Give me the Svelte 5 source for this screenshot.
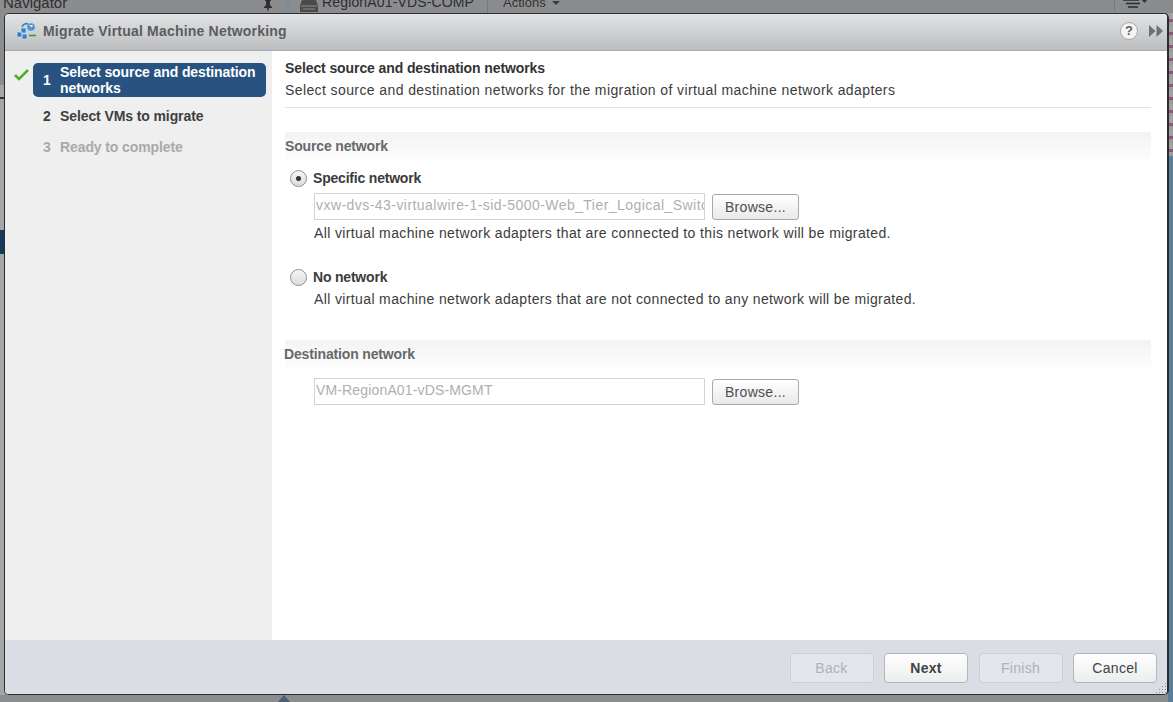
<script>
    const steps = [
        { n: 1, label: "Select source and destination networks", state: "active" },
        { n: 2, label: "Select VMs to migrate", state: "next" },
        { n: 3, label: "Ready to complete", state: "off" }
    ];
    const buttons = [
        { label: "Back", off: true },
        { label: "Next", bold: true },
        { label: "Finish", off: true },
        { label: "Cancel" }
    ];
</script>

<div class="screen">
    <div class="behind">
        <div class="behind_nav">Navigator</div>
        <svg class="pin" width="12" height="12" viewBox="0 0 12 12"><path d="M3 0h6v1H8v4l2 2v1H7l-1 4-1-4H2V7l2-2V1H3z" fill="#2f2f2f"/></svg>
        <div class="behind_sep"></div>
        <svg class="switch_icon" width="20" height="12" viewBox="0 0 20 12"><path d="M3 0h14l2 6v6H1V6z" fill="#4a4a4a"/><path d="M2 6h16M4 9h12" stroke="#8d8d8d"/></svg>
        <div class="behind_title">RegionA01-VDS-COMP</div>
        <div class="behind_actions">Actions <span class="caret"></span></div>
        <svg class="list_icon" width="26" height="12" viewBox="0 0 26 12"><path d="M1 1h16M4 4.500h14M6 8h10" stroke="#2b2b2b" stroke-width="1.500"/><path d="M19 0h7l-3.500 4z" fill="#333"/></svg>
    </div>
    <div class="left_strip"></div>
    <div class="left_mark"></div>
    <div class="right_strip"></div>
    <div class="bottom_mark"></div>

    <div class="modal">
        <header class="titlebar">
            <svg class="title_icon" width="20" height="18" viewBox="0 0 20 18">
                <path d="M1 10h5v5H1zM5 6h5v5H5zM6 12h5v5H6z" fill="#3b7fc9" stroke="#d8e6f4" stroke-width="0.600"/>
                <path d="M6 5c1-3 4-4 6-3" fill="none" stroke="#3b7fc9" stroke-width="1.600"/>
                <circle cx="15" cy="5" r="3.800" fill="#4a93d8"/>
                <path d="M13.500 3.500h3l-1.500 2" fill="none" stroke="#fff"/>
                <path d="M13 13.500h7" stroke="#2aa02a" stroke-width="1.600"/>
            </svg>
            <span class="title">Migrate Virtual Machine Networking</span>
            <span class="help">?</span>
            <svg class="more" width="14" height="12" viewBox="0 0 14 12"><path d="M0 0l6.500 6L0 12zM7.500 0L14 6l-6.500 6z" fill="#6e7174"/></svg>
        </header>

        <div class="body">
            <nav class="steps">
                {#each steps as s}
                    <div class="step {s.state}">
                        {#if s.state == "active"}
                            <svg class="check" width="16" height="13" viewBox="0 0 16 13"><path d="M1 7l4 4 9-9" fill="none" stroke="#4fae2e" stroke-width="2.500"/></svg>
                        {/if}
                        <span class="num">{s.n}</span>
                        <span class="label">{s.label}</span>
                    </div>
                {/each}
            </nav>

            <main class="content">
                <div class="page_head">
                    <div class="page_title">Select source and destination networks</div>
                    <div class="page_sub">Select source and destination networks for the migration of virtual machine network adapters</div>
                </div>

                <section class="group first">
                    <div class="group_title">Source network</div>
                    <div class="radio_row">
                        <span class="radio on"></span>
                        <span class="radio_label">Specific network</span>
                    </div>
                    <div class="field_row">
                        <div class="field long">vxw-dvs-43-virtualwire-1-sid-5000-Web_Tier_Logical_Switch</div>
                        <button class="browse">Browse...</button>
                    </div>
                    <div class="hint">All virtual machine network adapters that are connected to this network will be migrated.</div>
                    <div class="radio_row second">
                        <span class="radio"></span>
                        <span class="radio_label">No network</span>
                    </div>
                    <div class="hint tight">All virtual machine network adapters that are not connected to any network will be migrated.</div>
                </section>

                <section class="group dest_group">
                    <div class="group_title">Destination network</div>
                    <div class="field_row dest">
                        <div class="field">VM-RegionA01-vDS-MGMT</div>
                        <button class="browse">Browse...</button>
                    </div>
                </section>
            </main>
        </div>

        <footer class="footer">
            {#each buttons as b}
                <button class="foot_btn" class:off={b.off} class:bold={b.bold}>{b.label}</button>
            {/each}
            <svg class="grip" width="12" height="12" viewBox="0 0 12 12"><path d="M10 1h1v1h-1zM7 4h1v1H7zM10 4h1v1h-1zM4 7h1v1H4zM7 7h1v1H7zM10 7h1v1h-1zM1 10h1v1H1zM4 10h1v1H4zM7 10h1v1H7zM10 10h1v1h-1z" fill="#8a8f96"/></svg>
        </footer>
    </div>
</div>

<style>
    :global(body) {
        margin: 0;
        font-family: "Liberation Sans", Arial, sans-serif;
    }

    .screen {
        position: relative;
        width: 1173px;
        height: 702px;
        overflow: hidden;
        background: #8c8d8f;
    }

    .behind {
        display: flex;
        align-items: center;
        height: 13px;
        background: #8b8c8e;
        color: #2e2e2e;
        font-size: 14px;
        line-height: 13px;
        overflow: hidden;
    }

    .behind > div, .behind > svg {
        flex: none;
        position: relative;
        top: -4px;
    }

    .behind_nav {
        margin-left: 3px;
        width: 258px;
        font-size: 15px;
    }

    .pin {
        top: -1px !important;
        margin-left: 1px;
    }

    .behind_sep {
        width: 2px;
        height: 20px;
        margin-left: 13px;
        background: #6f8eaa;
    }

    .switch_icon {
        margin-left: 10px;
        top: -1px !important;
    }

    .behind_title {
        margin-left: 3px;
        width: 165px;
        letter-spacing: 0.15px;
    }

    .behind_actions {
        padding-left: 15px;
        height: 20px;
        border-left: 1px solid #777;
        color: #333;
        font-size: 13px;
        line-height: 20px;
    }

    .caret {
        display: inline-block;
        margin-left: 3px;
        vertical-align: 2px;
        border: 4px solid transparent;
        border-top-color: #3a3a3a;
        border-bottom: 0;
    }

    .list_icon {
        margin-left: 554px;
        padding-left: 7px;
        border-left: 1px solid #777;
        top: -2px !important;
    }

    .left_strip {
        position: absolute;
        left: 0;
        top: 85px;
        width: 5px;
        height: 610px;
        background:
            linear-gradient(#333, #333) 0 12px / 5px 2px no-repeat,
            #a6a6a6;
    }

    .left_mark {
        position: absolute;
        left: 0;
        top: 230px;
        width: 5px;
        height: 24px;
        background: #173a5c;
    }

    .right_strip {
        position: absolute;
        right: 0;
        top: 13px;
        width: 5px;
        height: 689px;
        background:
            linear-gradient(#5b7f99, #5b7f99) 0 143px / 5px 546px no-repeat,
            repeating-linear-gradient(#a2a2a2 0 6px, #8b5a78 6px 9px, #9c9c9c 9px 13px);
    }

    .bottom_mark {
        position: absolute;
        left: 278px;
        top: 695px;
        border: 6px solid transparent;
        border-bottom: 7px solid #4c5f75;
        border-top: 0;
    }

    .modal {
        position: absolute;
        left: 4px;
        top: 13px;
        width: 1165px;
        height: 682px;
        box-sizing: border-box;
        display: flex;
        flex-direction: column;
        background: #fff;
        border: 1px solid #2b2d30;
        border-right-width: 2px;
        border-radius: 5px;
        overflow: hidden;
    }

    .titlebar {
        flex: none;
        display: flex;
        align-items: center;
        height: 37px;
        box-sizing: border-box;
        padding: 0 4px 2px 11px;
        background: linear-gradient(#e2e3e5, #bcbdbf);
        border-bottom: 1px solid #a9aaac;
    }

    .title_icon {
        flex: none;
        margin-right: 7px;
    }

    .title {
        flex: 1;
        font-size: 14px;
        font-weight: bold;
        letter-spacing: 0.2px;
        color: #5a5d61;
    }

    .help {
        width: 16px;
        height: 16px;
        margin-right: 11px;
        border: 1px solid #a8a8a8;
        border-radius: 50%;
        background: #f4f4f4;
        color: #5d5f62;
        font-size: 13px;
        font-weight: bold;
        line-height: 16px;
        text-align: center;
    }

    .body {
        flex: 1;
        display: flex;
        min-height: 0;
    }

    .steps {
        flex: none;
        width: 267px;
        box-sizing: border-box;
        padding: 12px 6px 0 28px;
        background: #efefef;
        font-size: 14px;
        font-weight: bold;
        letter-spacing: -0.1px;
    }

    .step {
        position: relative;
        display: flex;
        align-items: center;
        height: 31px;
        padding-left: 10px;
        color: #3f3f3f;
    }

    .step .num {
        flex: none;
        width: 17px;
    }

    .step.off {
        color: #a9a9a9;
    }

    .step.active {
        height: 34px;
        margin-bottom: 3px;
        border-radius: 5px;
        background: #28527f;
        color: #fff;
        line-height: 16px;
    }

    .check {
        position: absolute;
        left: -19px;
        top: 5px;
    }

    .content {
        flex: 1;
        min-width: 0;
        padding: 9px 16px 0 13px;
        color: #3c3c3c;
        font-size: 14px;
    }

    .page_head {
        height: 47px;
        border-bottom: 1px solid #e3e3e3;
    }

    .page_title {
        font-weight: bold;
        line-height: 17px;
        letter-spacing: -0.1px;
        color: #333;
    }

    .page_sub {
        margin-top: 5px;
        line-height: 17px;
        letter-spacing: 0.4px;
    }

    .group {
        margin-top: 24px;
    }

    .dest_group {
        margin-top: 32px;
    }

    .dest_group .group_title {
        text-indent: -1px;
    }

    .group_title {
        height: 33px;
        padding-top: 6px;
        box-sizing: border-box;
        background: linear-gradient(#f3f3f3, #fff);
        color: #66696c;
        font-weight: bold;
        line-height: 16px;
        letter-spacing: -0.15px;
    }

    .radio_row {
        display: flex;
        align-items: center;
        height: 18px;
        margin: 4px 0 0 5px;
    }

    .radio_row.second {
        margin-top: 26px;
    }

    .radio {
        position: relative;
        width: 15px;
        height: 15px;
        margin-right: 6px;
        border: 1px solid #8f8f8f;
        border-radius: 50%;
        background: linear-gradient(#f6f6f6, #dcdcdc);
    }

    .radio.on::after {
        content: "";
        position: absolute;
        left: 5px;
        top: 5px;
        width: 5px;
        height: 5px;
        border-radius: 50%;
        background: #333;
    }

    .radio_label {
        font-weight: bold;
        color: #3b3b3b;
        letter-spacing: -0.2px;
    }

    .field_row {
        display: flex;
        align-items: center;
        gap: 7px;
        margin: 6px 0 0 29px;
    }

    .field_row.dest {
        margin-top: 5px;
    }

    .field {
        width: 391px;
        height: 27px;
        box-sizing: border-box;
        padding: 0 1px;
        border: 1px solid #d3d3d3;
        background: #fff;
        color: #adb0b0;
        font-size: 14px;
        line-height: 23px;
        letter-spacing: 0.15px;
        white-space: nowrap;
        overflow: hidden;
    }

    .field.long {
        letter-spacing: 0.45px;
    }

    .browse {
        width: 87px;
        height: 26px;
        padding: 0;
        border: 1px solid #a9a9a9;
        border-radius: 3px;
        background: linear-gradient(#fff, #e9e9e9);
        color: #4c4f52;
        font-family: inherit;
        font-size: 14px;
        letter-spacing: 0.3px;
    }

    .hint {
        margin: 5px 0 0 29px;
        line-height: 17px;
        letter-spacing: 0.37px;
    }

    .footer {
        position: relative;
        flex: none;
        display: flex;
        justify-content: flex-end;
        gap: 10.500px;
        height: 54px;
        box-sizing: border-box;
        padding: 13px 10px 0 0;
        background: #dadee4;
    }

    .foot_btn {
        width: 84px;
        height: 30px;
        padding: 0;
        border: 1px solid #b4b6b8;
        border-radius: 4px;
        background: linear-gradient(#fff, #eceded);
        color: #3f4245;
        font-family: inherit;
        font-size: 14px;
        letter-spacing: 0.3px;
    }

    .foot_btn.bold {
        font-weight: bold;
    }

    .foot_btn.off {
        border-color: #cdd0d3;
        background: #e3e6ea;
        color: #aeb2b6;
    }

    .grip {
        position: absolute;
        right: 0;
        bottom: 0;
    }
</style>
